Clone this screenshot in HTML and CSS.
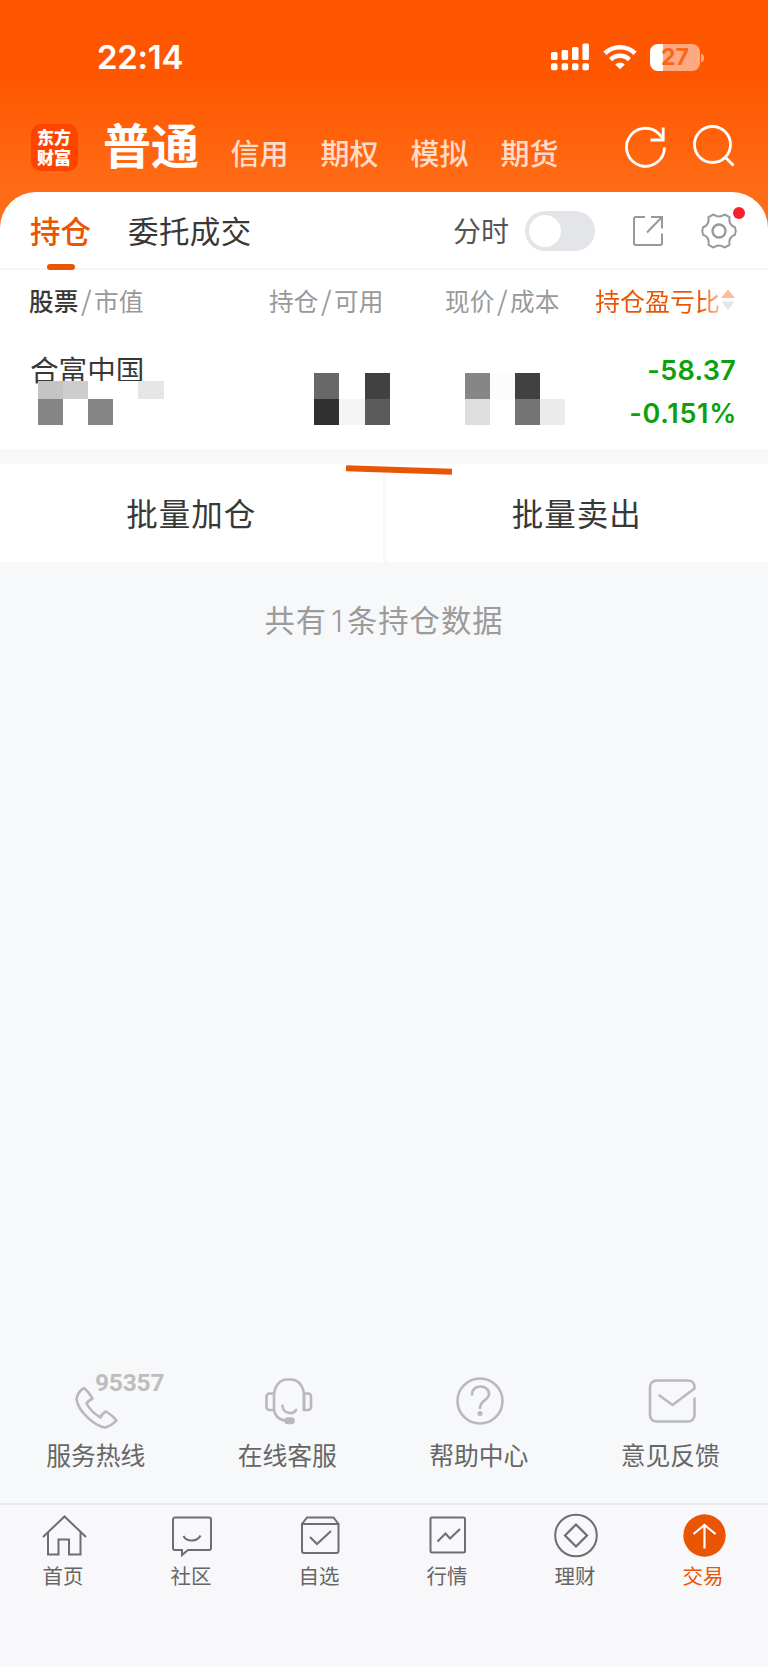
FILE: index.html
```html
<!DOCTYPE html>
<html lang="zh-CN">
<head>
  <meta charset="UTF-8">
  <meta name="viewport" content="width=device-width, initial-scale=1.0">
  <title>持仓</title>
  <link rel="stylesheet" href="styles.css">
</head>
<body>
  <header class="header">
    <div class="status-bar">
      <span class="time">22:14</span>
      <div class="status-icons">
        <svg class="signal" width="39" height="28" viewBox="0 0 39 28" fill="#fff">
          <rect x="0" y="9" width="6.5" height="8" rx="1.5"/>
          <rect x="10.6" y="7" width="6.5" height="10" rx="1.5"/>
          <rect x="21" y="4" width="6.5" height="13" rx="1.5"/>
          <rect x="31.4" y="0.5" width="6.5" height="16.5" rx="1.5"/>
          <rect x="0" y="20.3" width="6.5" height="7" rx="1.8"/>
          <rect x="10.6" y="20.3" width="6.5" height="7" rx="1.8"/>
          <rect x="21" y="20.3" width="6.5" height="7" rx="1.8"/>
          <rect x="31.4" y="20.3" width="6.5" height="7" rx="1.8"/>
        </svg>
        <svg class="wifi" width="34" height="26" viewBox="0 0 34 26" fill="none" stroke="#fff" stroke-width="4.6">
          <path d="M2 9.3a21.5 21.5 0 0 1 30 0"/>
          <path d="M7.6 15.6a13.5 13.5 0 0 1 18.8 0"/>
          <path d="M17 25.3l-4.8-4.8a6.8 6.8 0 0 1 9.6 0z" fill="#fff" stroke="none"/>
        </svg>
        <div class="battery"><span>27</span></div>
      </div>
    </div>

    <nav class="account-nav">
      <div class="logo">东方财富</div>
      <h1>普通</h1>
      <ul class="account-types">
        <li>信用</li>
        <li>期权</li>
        <li>模拟</li>
        <li>期货</li>
      </ul>
      <div class="nav-actions">
        <svg width="44" height="44" viewBox="0 0 44 44" fill="none" stroke="#fff" stroke-width="2.8">
          <path d="M40.5 22.5a19 19 0 1 1-5.4-13.5L39.5 14"/>
          <path d="M39.2 2.5v12.5H26.5"/>
        </svg>
        <svg width="44" height="44" viewBox="0 0 44 44" fill="none" stroke="#fff" stroke-width="2.8">
          <circle cx="20.5" cy="19.5" r="18"/>
          <path d="M32.5 31.5l9 9"/>
        </svg>
      </div>
    </nav>
  </header>

  <main>
    <section class="panel">
      <div class="tabs">
        <span class="tab active">持仓</span>
        <span class="tab">委托成交</span>
        <div class="tab-tools">
          <span class="toggle-label">分时</span>
          <span class="toggle"></span>
          <svg class="share" width="32" height="32" viewBox="0 0 32 32" fill="none" stroke="#999" stroke-width="2">
            <path d="M13 2H4a2 2 0 0 0-2 2v24a2 2 0 0 0 2 2h24a2 2 0 0 0 2-2v-9.5"/>
            <path d="M19 2h11v11.5M29.5 2.5L15 17.5"/>
          </svg>
          <span class="settings">
            <svg width="38" height="38" viewBox="0 0 38 38" fill="none" stroke="#999" stroke-width="2" stroke-linejoin="round">
              <path d="M13.500 2.500Q19 6.500 24.500 2.500L29.500 5.200Q28.200 13 35 15.300Q36.500 19 35 22.700Q28.200 25 29.500 32.800L24.500 35.500Q19 31.500 13.500 35.500L8.500 32.800Q9.800 25 3 22.700Q1.500 19 3 15.300Q9.800 13 8.500 5.200Z"/>
              <circle cx="19" cy="19" r="6.5" stroke-width="2.4"/>
            </svg>
            <i class="dot"></i>
          </span>
        </div>
      </div>

      <div class="row row-head">
        <div class="col-name"><b>股票</b><em>/</em>市值</div>
        <div class="col-hold">持仓<em>/</em>可用</div>
        <div class="col-price">现价<em>/</em>成本</div>
        <div class="col-profit"><span>持仓盈亏比</span>
          <svg width="16" height="22" viewBox="0 0 16 22">
            <path d="M8 0.5L15 9H1z" fill="#f9bd9c"/>
            <path d="M8 21L1 12.5h14z" fill="#e4e6ea"/>
          </svg>
        </div>
      </div>

      <div class="row row-stock">
        <div class="col-name">
          <span class="stock-name">合富中国</span>
          <div class="mosaic mosaic-name">
            <i class="c4"></i><i class="c5"></i><i class="c0"></i><i class="c0"></i><i class="c7"></i>
            <i class="c3"></i><i class="c0"></i><i class="c3"></i><i class="c0"></i><i class="c0"></i>
          </div>
        </div>
        <div class="col-hold">
          <div class="mosaic mosaic-hold">
            <i class="c2"></i><i class="c0"></i><i class="c1"></i>
            <i class="black"></i><i class="c9"></i><i class="c15"></i>
          </div>
        </div>
        <div class="col-price">
          <div class="mosaic mosaic-price">
            <i class="c3"></i><i class="c10"></i><i class="c1"></i><i class="c0"></i>
            <i class="c6"></i><i class="c0"></i><i class="c25"></i><i class="c8"></i>
          </div>
        </div>
        <div class="col-profit">
          <span class="amount">-58.37</span>
          <span class="percent">-0.151%</span>
        </div>
      </div>
    </section>

    <section class="batch">
      <div class="batch-btn">批量加仓</div>
      <div class="batch-btn">批量卖出</div>
      <i class="mark"></i>
    </section>

    <p class="count">共有<span>1</span>条持仓数据</p>
  </main>

  <section class="services">
    <div class="service">
      <svg width="96" height="64" viewBox="0 0 96 64">
        <path d="M36 18C32 20 29 25 28.5 29C30 41 46 56 57 57.5C62 56 66 53 68.5 50.3Q64 45 58 41.5Q54 43.5 52.5 47.5Q43 42 38.5 33.5Q40 31 44.5 28.5Q41 22 36 18Z"/>
      </svg>
      <span class="hotline">95357</span>
      <p>服务热线</p>
    </div>
    <div class="service">
      <svg width="96" height="64" viewBox="0 0 96 64">
        <path d="M35 41V26.5C35 15 42 9.500 48 9.500h3.500C58.500 9.500 65 15 65 26.500V40M35 38C35 46 41 50.500 47 50.500"/>
        <path d="M35 23.500h-4.500a3 3 0 0 0-3 3v10.500a3 3 0 0 0 3 3H35M65 23.500h4a3 3 0 0 1 3 3v10.500a3 3 0 0 1-3 3H65z"/>
        <path d="M43.500 35.500c.5 9 11 9 13.500 4.500"/>
        <rect x="46.500" y="48.500" width="8" height="4.500" rx="2.200" fill="#b9b9bb"/>
      </svg>
      <p>在线客服</p>
    </div>
    <div class="service">
      <svg width="96" height="64" viewBox="0 0 96 64">
        <circle cx="49" cy="31" r="22.5"/>
        <path d="M41 24.5c0-11 17-10 17-.5c0 6-9 6.500-9 14"/>
        <circle cx="49" cy="43.5" r="2.5" fill="#b9b9bb" stroke="none"/>
      </svg>
      <p>帮助中心</p>
    </div>
    <div class="service">
      <svg width="96" height="64" viewBox="0 0 96 64">
        <path d="M72.500 28.500v16.500a6.500 6.500 0 0 1-6.500 6.500H34.500a6.500 6.500 0 0 1-6.500-6.500V17a6.500 6.500 0 0 1 6.500-6.500H66c4 0 6.500 3 6.500 6.500v1.500L50.500 35L37.500 25.500"/>
      </svg>
      <p>意见反馈</p>
    </div>
  </section>

  <footer class="tab-bar">
    <div class="tab-item">
      <svg width="46" height="46" viewBox="0 0 46 46">
        <path d="M2 24L23.5 3.5L45 24M7 19v22.5h10.5V26.5h10.5v15h11.5V19"/>
      </svg>
      <span>首页</span>
    </div>
    <div class="tab-item">
      <svg width="46" height="46" viewBox="0 0 46 46">
        <path d="M6 4.5h34a2 2 0 0 1 2 2V35a2 2 0 0 1-2 2H19l-6 5v-5H6a2 2 0 0 1-2-2V6.5a2 2 0 0 1 2-2z"/>
        <path d="M14.5 23c3 6 14 6 17-.5"/>
      </svg>
      <span>社区</span>
    </div>
    <div class="tab-item">
      <svg width="46" height="46" viewBox="0 0 46 46">
        <path d="M5 11L10 4.5h26.5l5 6.5M5 11h36.5V38a2 2 0 0 1-2 2H7a2 2 0 0 1-2-2z"/>
        <path d="M13 24l7 7l14-13"/>
      </svg>
      <span>自选</span>
    </div>
    <div class="tab-item">
      <svg width="46" height="46" viewBox="0 0 46 46">
        <rect x="5.5" y="4.5" width="34.5" height="35" rx="1.5"/>
        <path d="M12.5 28.5l8-8l4.5 5l10-9.5"/>
      </svg>
      <span>行情</span>
    </div>
    <div class="tab-item">
      <svg width="46" height="46" viewBox="0 0 46 46">
        <circle cx="23" cy="22.5" r="20.8"/>
        <path d="M23 11.5l11 11l-11 11l-11-11z" stroke-width="2.2"/>
      </svg>
      <span>理财</span>
    </div>
    <div class="tab-item active">
      <svg width="46" height="46" viewBox="0 0 46 46">
        <circle cx="23.5" cy="22.5" r="21.2" fill="#ea5504" stroke="none"/>
        <path d="M23.5 35.5V12.5M12.5 21l11-9l11 9" stroke="#fff" stroke-width="2.2"/>
      </svg>
      <span>交易</span>
    </div>
  </footer>
</body>
</html>
```
FILE: styles.css
```css
:root {
  --orange: #ea5504;
  --green: #0ba10b;
  --text: #383838;
  --text-secondary: #666;
  --text-muted: #999;
  --background: #f7f8fa;
}

* {
  margin: 0;
  padding: 0;
  box-sizing: border-box;
}

body {
  width: 768px;
  height: 1667px;
  display: flex;
  flex-direction: column;
  overflow: hidden;
  background: var(--background);
  color: var(--text);
  font-family: 'Noto Sans CJK SC', 'Inter', sans-serif;
}

svg {
  display: block;
  flex-shrink: 0;
}

i, em {
  font-style: normal;
}

/* Header */
.header {
  height: 240px;
  flex-shrink: 0;
  background: linear-gradient(#ff5700 0, #ff5700 80px, #ff6c17 190px, #ff6c1c);
  color: #fff;
}

.status-bar {
  height: 114px;
  padding: 0 65px 0 97px;
  display: flex;
  align-items: center;
  justify-content: space-between;
  font-family: 'Inter', sans-serif;
}

.time {
  font-size: 33px;
  font-weight: 600;
  letter-spacing: -0.3px;
}

.status-icons {
  display: flex;
  align-items: center;
}

.wifi {
  margin-left: 13px;
}

.battery {
  width: 50px;
  height: 27px;
  margin-left: 13px;
  margin-right: 3px;
  position: relative;
  border-radius: 8px;
  background: linear-gradient(90deg, #fff 27%, #ffa983 27%);
  color: #f9671a;
  font-size: 23px;
  font-weight: 700;
  line-height: 27px;
  text-align: center;
}

.battery::after {
  content: '';
  position: absolute;
  right: -4px;
  top: 10px;
  width: 3px;
  height: 8px;
  border-radius: 0 3px 3px 0;
  background: #ffa983;
}

.account-nav {
  height: 66px;
  padding: 0 32px 0 31px;
  display: flex;
  align-items: center;
}

.logo {
  width: 47px;
  height: 47px;
  padding: 3px 6px 0;
  border-radius: 10px;
  background: #ff4400;
  font-size: 17px;
  font-weight: 900;
  line-height: 20px;
}

.account-nav h1 {
  margin-left: 25px;
  margin-top: -8px;
  font-size: 48px;
  font-weight: 700;
  line-height: 66px;
}

.account-types {
  margin-left: 31.5px;
  padding-top: 10px;
  display: flex;
  gap: 32px;
  list-style: none;
  font-size: 29px;
  font-weight: 500;
  color: #ffdcc8;
}

.nav-actions {
  margin-left: auto;
  display: flex;
  gap: 24px;
}

/* Holdings */
.panel {
  height: 257px;
  margin-top: -48px;
  border-radius: 36px 36px 0 0;
  background: #fff;
}

.tabs {
  height: 78px;
  padding: 0 30px;
  display: flex;
  align-items: center;
  border-bottom: 2px solid #f6f6f7;
}

.tab {
  position: relative;
  margin-top: -1px;
  margin-right: 37px;
  font-size: 30.5px;
  line-height: 76px;
  letter-spacing: 0.4px;
}

.tab.active {
  color: var(--orange);
  font-weight: 500;
  letter-spacing: 0;
}

.tab.active::after {
  content: '';
  position: absolute;
  left: 17px;
  bottom: -2px;
  width: 28px;
  height: 6px;
  border-radius: 3px;
  background: var(--orange);
}

.tab-tools {
  margin-left: auto;
  padding-top: 1px;
  display: flex;
  align-items: center;
}

.toggle-label {
  margin-top: -2px;
  font-size: 28px;
  color: #555;
}

.toggle {
  width: 70px;
  height: 40px;
  margin-left: 16px;
  padding: 4px;
  border-radius: 20px;
  background: #e4e5e8;
}

.toggle::before {
  content: '';
  display: block;
  width: 32px;
  height: 32px;
  border-radius: 50%;
  background: #fff;
}

.share {
  margin-left: 37px;
}

.settings {
  position: relative;
  margin-left: 36px;
}

.dot {
  position: absolute;
  top: -5px;
  right: -7px;
  width: 12px;
  height: 12px;
  border-radius: 50%;
  background: #f5222d;
}

.row {
  display: grid;
  grid-template-columns: 240px 176px 150px 1fr;
  padding: 0 32px 0 29px;
}

.row-head {
  height: 64px;
  font-size: 24.7px;
  line-height: 60px;
  color: var(--text-muted);
}

.row-head b {
  font-weight: 500;
  color: var(--text);
}

.row-head em {
  padding: 0 2.5px;
  font-size: 27px;
}

.row-head .col-profit {
  height: 60px;
  display: flex;
  align-items: center;
  justify-content: flex-end;
  font-size: 25px;
  white-space: nowrap;
}

/* the end of the label fades out next to the sort arrows */
.row-head .col-profit span {
  background: linear-gradient(90deg, var(--orange) 84%, #f9bd9c);
  -webkit-background-clip: text;
  background-clip: text;
  -webkit-text-fill-color: transparent;
}

.row-stock {
  height: 115px;
}

.stock-name {
  display: block;
  height: 47px;
  padding-left: 1px;
  font-size: 28.6px;
  line-height: 69px;
}

.mosaic {
  position: relative;
  display: grid;
  grid-template-rows: 26px 26px;
}

.mosaic-name {
  width: 126px;
  margin-left: 8.6px;
  grid-template-columns: repeat(5, 1fr);
  grid-template-rows: 18px 26px;
}

.mosaic-hold {
  width: 76px;
  margin: 39px 0 0 45px;
  grid-template-columns: repeat(3, 1fr);
}

.mosaic-price {
  width: 100px;
  margin: 39px 0 0 20px;
  grid-template-columns: repeat(4, 1fr);
}

.black { background: #303030; }
.c0 { background: #fff; }
.c1 { background: #414141; }
.c15 { background: #5b5b5b; }
.c2 { background: #686868; }
.c25 { background: #747474; }
.c3 { background: #868686; }
.c4 { background: #c4c4c4; }
.c5 { background: #cdcdcd; }
.c6 { background: #dedede; }
.c7 { background: #e6e6e6; }
.c8 { background: #ebebeb; }
.c9 { background: #f5f5f5; }
.c10 { background: #fcfcfc; }

.row-stock .col-profit {
  padding-top: 16px;
  display: flex;
  flex-direction: column;
  align-items: flex-end;
  font-family: 'Inter', sans-serif;
  font-size: 27px;
  font-weight: 600;
  line-height: 42.5px;
  color: var(--green);
}

.amount {
  letter-spacing: 0.3px;
}

.percent {
  letter-spacing: 0.7px;
  margin-right: -1px;
}

/* Batch actions */
.batch {
  position: relative;
  height: 98px;
  margin-top: 15px;
  display: grid;
  grid-template-columns: 1fr 1fr;
  gap: 3px;
}

.batch-btn {
  background: #fff;
  text-align: center;
  font-size: 31.5px;
  line-height: 97px;
  letter-spacing: 1px;
}

.mark {
  position: absolute;
  left: 346px;
  top: 3px;
  width: 106px;
  height: 5.5px;
  background: var(--orange);
  transform: rotate(2deg);
}

.count {
  margin-top: 35px;
  text-align: center;
  font-size: 30.3px;
  line-height: 44px;
  letter-spacing: 1px;
  color: #9b9b9b;
}

.count span {
  padding: 0 3px 0 4px;
  font-family: 'Inter', sans-serif;
  font-weight: 300;
}

/* Service links */
.services {
  margin-top: auto;
  height: 133px;
  display: grid;
  grid-template-columns: repeat(4, 1fr);
  padding-right: 2px;
}

.service {
  position: relative;
  display: flex;
  flex-direction: column;
  align-items: center;
  font-size: 24.8px;
  color: var(--text-secondary);
}

.service svg {
  fill: none;
  stroke: #b9b9bb;
  stroke-width: 2.6;
  stroke-linecap: round;
  stroke-linejoin: round;
}

.service p {
  margin-top: 2px;
  line-height: 36px;
}

.hotline {
  position: absolute;
  left: 95px;
  top: 0;
  font-family: 'Roboto', sans-serif;
  font-size: 24.5px;
  font-weight: 700;
  line-height: 26px;
  letter-spacing: -0.2px;
  color: #bdbdbd;
}

/* Bottom tab bar */
.tab-bar {
  height: 164px;
  flex-shrink: 0;
  display: grid;
  grid-template-columns: repeat(6, 1fr);
  border-top: 2px solid #e8e9eb;
  background: #f8f8fb;
}

.tab-item {
  padding-top: 8px;
  display: flex;
  flex-direction: column;
  align-items: center;
  font-size: 20.5px;
  line-height: 30px;
  color: var(--text-secondary);
}

.tab-item svg {
  fill: none;
  stroke: #6e6e70;
  stroke-width: 2;
}

.tab-item span {
  margin-top: 1px;
  padding-right: 2px;
}

.tab-item.active {
  color: var(--orange);
}
```
